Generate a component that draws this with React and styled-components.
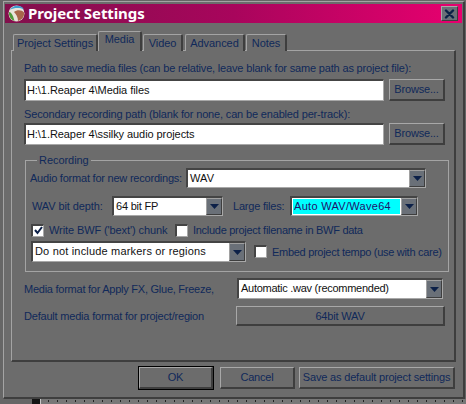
import React from 'react';
import styled, { createGlobalStyle } from 'styled-components';

const Global = createGlobalStyle`
  html, body { margin: 0; padding: 0; background: #6c6c6c; }
  body { width: 466px; height: 404px; overflow: hidden; font-family: "Liberation Sans", Arial, sans-serif; }
  * { box-sizing: border-box; }
`;

const Page = styled.div`
  width: 466px; height: 404px; display: flex; flex-direction: column; background: #666;
`;
const Win = styled.div`
  width: 462px; height: 398px; flex: none; margin: 1px 1px 0 3px; background: #6c6c6c;
  border-top: 1px solid #a4a4a4; border-left: 1px solid #a4a4a4;
  border-bottom: 2px solid #3e3e3e; border-right: 2px solid #3e3e3e;
  padding: 2px 1px 0 1px; display: flex; flex-direction: column;
`;
const TitleBar = styled.div`
  height: 19px; flex: none; display: flex; align-items: center;
  background: linear-gradient(90deg, #82104c 0%, #a8055c 50%, #e8006f 100%);
  padding: 0 4px 0 3px;
`;
const TitleText = styled.div`
  font-family: "Noto Sans", sans-serif; font-weight: 700; font-size: 15px; letter-spacing: -.1px; color: #fff; margin-left: 3px; flex: 1; line-height: 19px;
`;
const CloseBtn = styled.div`
  width: 17px; height: 15px; background: #6a7078; border: 1px solid; border-color: #a8a8a8 #3e3e3e #3e3e3e #a8a8a8;
  display: flex; align-items: center; justify-content: center;
`;
const Tabs = styled.div`
  display: flex; align-items: flex-end; height: 28px; flex: none; padding-left: 8px; margin-bottom: -1px; position: relative;
`;
const Tab = styled.div`
  height: ${p => p.$active ? 20 : 17}px; width: ${p => p.$w}px; margin-right: ${p => p.$mr ?? 1}px;
  border: 1px solid #a4a4a4; border-bottom: none; border-right: 2px solid #3e3e3e; border-radius: 2px 2px 0 0;
  background: #6c6c6c; color: #10295a; font-size: 11px; letter-spacing: -.05px; text-align: center; white-space: nowrap;
  line-height: ${p => p.$active ? 15 : 16}px; position: relative; z-index: ${p => p.$active ? 2 : 0};
`;
const Panel = styled.div`
  margin-left: 6px; width: 445px; height: 312px; flex: none;
  border: 1px solid #a4a4a4; border-right: 2px solid #3e3e3e; border-bottom: 2px solid #3e3e3e;
  padding: 10px 0 0 12px; display: flex; flex-direction: column;
`;
const Label = styled.div`
  font-size: 11px; letter-spacing: ${p => p.$ls ?? -.2}px; color: #10295a; white-space: nowrap; line-height: 14px;
  width: ${p => p.$w ? p.$w + 'px' : 'auto'}; margin-left: ${p => p.$ml || 0}px; flex: none;
`;
const PathRow = styled.div`
  display: flex; gap: 5px; margin: ${p => p.$mt}px 0 ${p => p.$mb}px; height: 22px;
`;
const PathInput = styled.div`
  width: 360px; background: #fff; border: 2px solid; border-color: #444 #a8a8a8 #a8a8a8 #444;
  border-width: 2px 1px 1px 2px; font-size: 11px; letter-spacing: -.07px; color: #111; line-height: 18px; padding-left: 1px; white-space: nowrap;
`;
const Btn = styled.div`
  border: 1px solid; border-color: #a8a8a8 #3e3e3e #3e3e3e #a8a8a8; border-width: 1px 2px 2px 1px;
  color: #10295a; font-size: 11px; letter-spacing: -.17px; text-align: center; line-height: 18px; width: ${p => p.$w}px; height: ${p => p.$h || 22}px;
  white-space: nowrap; flex: none; outline: ${p => p.$def ? '1px solid #000' : 'none'}; margin-left: ${p => p.$ml || 0}px;
`;
const Group = styled.fieldset`
  margin: 11px 0 0 1px; padding: 0 0 0 5px; width: 424px; height: 116px; flex: none; min-width: 0;
  border: 1px solid #a4a4a4; position: relative;
`;
const Legend = styled.legend`
  font-size: 11px; letter-spacing: -.05px; color: #10295a; padding: 0 2px; margin-left: 6px; line-height: 9px; height: 8px;
`;
const Row = styled.div`
  display: flex; align-items: center; height: ${p => p.$h}px; margin-top: ${p => p.$mt || 0}px; margin-left: ${p => p.$pl || 0}px;
`;
const SelectBox = styled.div`
  width: ${p => p.$w}px; height: ${p => p.$h || 20}px; display: flex; flex: none;
  border: 2px solid; border-color: #444 #a8a8a8 #a8a8a8 #444; border-width: 2px 1px 1px 2px;
  margin-left: ${p => p.$ml || 0}px;
`;
const SelectText = styled.div`
  flex: 1; min-width: 0; background: ${p => p.$bg || '#fff'}; font-size: 11px; color: ${p => p.$fg || '#111'}; letter-spacing: ${p => p.$ls ?? 0}px;
  line-height: 17px; padding-left: 2px; white-space: nowrap; border: ${p => p.$bg ? '1px solid #fff' : 'none'}; ${p => p.$bg ? 'line-height: 15px; padding-left: 1px;' : ''}
`;
const Arrow = styled.div`
  width: 16px; flex: none; background: #6a7078; border: 1px solid; border-color: #a0a0a0 #3e3e3e #3e3e3e #a0a0a0;
  display: flex; align-items: center; justify-content: center;
`;
const Check = styled.div`
  width: 13px; height: 13px; flex: none; background: #fff; border: 2px solid; border-color: #444 #a8a8a8 #a8a8a8 #444;
  border-width: 2px 1px 1px 2px; display: flex; align-items: center; justify-content: center; margin-right: 5px; margin-left: ${p => p.$ml || 0}px;
`;
const WideRow = styled.div`
  display: flex; align-items: center; height: ${p => p.$h}px; margin-top: ${p => p.$mt || 0}px;
`;
const Footer = styled.div`
  display: flex; padding-left: 134px; margin-top: 5px;
`;
const Bottom = styled.div`
  flex: 1; margin-left: 32px; border-left: 8px solid #141414; box-shadow: none; position: relative;
  background-color: #777;
  background-image:
    linear-gradient(90deg, #c8c8c8 1px, transparent 1px),
    repeating-linear-gradient(0deg, #777 0 2px, transparent 2px 4px),
    linear-gradient(90deg, #222 1px, transparent 1px);
  background-size: 100% 100%, 100% 100%, 9px 4px;
  background-position: 0 0, 0 0, 8px 0;
`;

const Caret = () => (
  <svg width="9" height="5" viewBox="0 0 9 5"><path d="M0 0h9L4.500 5z" fill="#0c2048" /></svg>
);
const Select = ({ w, h, ml, bg, fg, ls, children }) => (
  <SelectBox $w={w} $h={h} $ml={ml}>
    <SelectText $bg={bg} $fg={fg} $ls={ls}>{children}</SelectText>
    <Arrow><Caret /></Arrow>
  </SelectBox>
);

export default function App() {
  return (
    <Page>
      <Global />
      <Win>
        <TitleBar>
          <svg width="17" height="17" viewBox="0 0 17 17">
            <circle cx="8.5" cy="8.5" r="8" fill="#e8e4dc" />
            <path d="M2 5C4 1.500 8-.5 13 1.500c1.500.8 2.400 1.800 3 3C12 2.500 6 2.500 2 5z" fill="#3f9fd0" />
            <path d="M1 7c2 0 4 3 5.500 9C3 15 .5 11 1 7z" fill="#4f9a3c" />
            <path d="M6 7c3-2.500 8-2 10 .5.500 4-2 7.500-6 8.500C10 12 8 9 6 7z" fill="#a8664a" />
          </svg>
          <TitleText>Project Settings</TitleText>
          <CloseBtn>
            <svg width="11" height="10" viewBox="0 0 11 10"><path d="M2 1.500l7 7M9 1.500l-7 7" stroke="#0a2146" strokeWidth="2.400" strokeLinecap="round" /></svg>
          </CloseBtn>
        </TitleBar>
        <Tabs>
          <Tab $w={85} $mr={0}>Project Settings</Tab>
          <Tab $w={44} $active>Media</Tab>
          <Tab $w={40} $mr={2}>Video</Tab>
          <Tab $w={60}>Advanced</Tab>
          <Tab $w={41}>Notes</Tab>
        </Tabs>
        <Panel>
          <Label $ls={-.17}>Path to save media files (can be relative, leave blank for same path as project file):</Label>
          <PathRow $mt={4} $mb={6}>
            <PathInput>H:\1.Reaper 4\Media files</PathInput>
            <Btn $w={56}>Browse...</Btn>
          </PathRow>
          <Label $ls={-.16}>Secondary recording path (blank for none, can be enabled per-track):</Label>
          <PathRow $mt={2} $mb={0}>
            <PathInput>H:\1.Reaper 4\ssilky audio projects</PathInput>
            <Btn $w={56}>Browse...</Btn>
          </PathRow>
          <Group>
            <Legend>Recording</Legend>
            <Row $h={20} $mt={4} $pl={-1}>
              <Label $w={156} $ls={-.22}>Audio format for new recordings:</Label>
              <Select w={240} ls={.1}>WAV</Select>
            </Row>
            <Row $h={20} $mt={8} $pl={1}>
              <Label $w={80} $ls={-.1}>WAV bit depth:</Label>
              <Select w={111} ls={-.2}>64 bit FP</Select>
              <Label $w={57} $ml={10}>Large files:</Label>
              <Select w={128} bg="#00ffff" fg="#20106a" ls={.3}>Auto WAV/Wave64</Select>
            </Row>
            <Row $h={14} $mt={7}>
              <Check>
                <svg width="9" height="9" viewBox="0 0 9 9"><path d="M1 4l2.500 3L8 1" fill="none" stroke="#0c2048" strokeWidth="2" /></svg>
              </Check>
              <Label $w={126} $ls={-.1}>Write BWF ('bext') chunk</Label>
              <Check />
              <Label $ls={-.28}>Include project filename in BWF data</Label>
            </Row>
            <Row $h={21} $mt={4}>
              <Select w={215} h={21} ls={.18}>Do not include markers or regions</Select>
              <Check $ml={8} />
              <Label $ls={-.29}>Embed project tempo (use with care)</Label>
            </Row>
          </Group>
          <WideRow $h={21} $mt={6}>
            <Label $w={213} $ls={-.25}>Media format for Apply FX, Glue, Freeze,</Label>
            <Select w={206} h={21} ls={-.27}>Automatic .wav (recommended)</Select>
          </WideRow>
          <WideRow $h={20} $mt={7}>
            <Label $w={212}>Default media format for project/region</Label>
            <Btn $w={209} $h={20}>64bit WAV</Btn>
          </WideRow>
        </Panel>
        <Footer>
          <Btn $w={74} $def>OK</Btn>
          <Btn $w={75} $ml={7}>Cancel</Btn>
          <Btn $w={156} $ml={4}>Save as default project settings</Btn>
        </Footer>
      </Win>
      <Bottom />
    </Page>
  );
}
